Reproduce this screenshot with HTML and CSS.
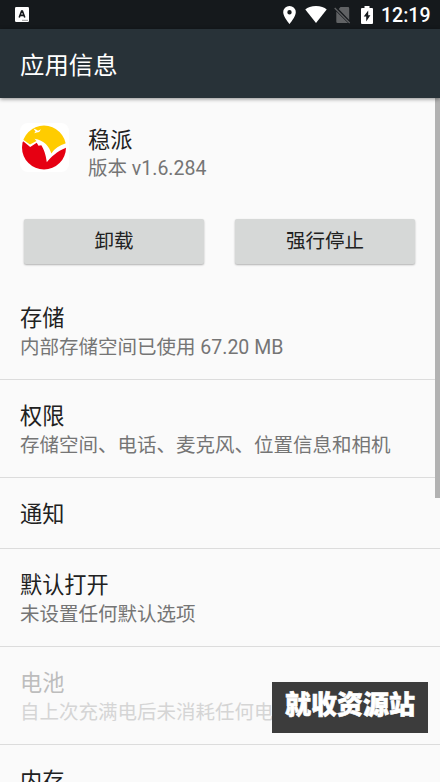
FILE: index.html
```html
<!DOCTYPE html>
<html lang="zh-CN">
<head>
<meta charset="utf-8">
<title>应用信息</title>
<link rel="stylesheet" href="styles.css">
</head>
<body>
<div class="screen">
  <div class="status">
    <svg class="notice" width="14" height="15" viewBox="0 0 14 15"><rect width="14" height="15" rx="1.2" fill="#fff"/><path d="M4.200 10.500 6.600 4h.8l2.400 6.500M5.200 8.400h3.600" fill="none" stroke="#15191c" stroke-width="1.600"/><path d="M7 13.300h6" stroke="#999" stroke-width="1"/></svg>
    <svg class="pin" width="13" height="18" viewBox="0 0 13 18"><path fill="#fff" fill-rule="evenodd" d="M6.500 0A6.300 6.300 0 0 0 .2 6.300C.2 11 6.500 18 6.500 18s6.300-7 6.300-11.700A6.300 6.300 0 0 0 6.500 0Zm0 4.100a2.200 2.200 0 1 1 0 4.400 2.200 2.200 0 0 1 0-4.400Z"/></svg>
    <svg class="wifi" width="22" height="17" viewBox="0 0 22 17"><path fill="#fff" d="M11 17 .3 3.500C2.500 1.400 6.400 0 11 0s8.500 1.400 10.700 3.500Z"/></svg>
    <svg class="sim" width="17" height="18" viewBox="0 0 17 18"><path fill="#606264" d="M6.500 1H14q1.200 0 1.200 1.200V14L4.700 3ZM2.300 5.500 14 17H3.500q-1.200 0-1.200-1.200Z"/><path d="m.7 2 15 15" stroke="#606264" stroke-width="1.300"/></svg>
    <svg class="battery" width="12" height="18" viewBox="0 0 12 18"><path fill="#fff" d="M3.500 0h5v2H11q1 0 1 1v14q0 1-1 1H1q-1 0-1-1V3q0-1 1-1h2.500Z"/><path fill="#15191c" d="M7.200 4.500 2.700 10.500h2.500v5l4.200-6.300H7.200Z"/></svg>
    <span class="clock">12:19</span>
  </div>
  <header class="appbar">应用信息</header>
  <main class="content">
    <section class="app">
      <svg class="logo" width="49" height="49" viewBox="0 0 49 49">
        <rect width="49" height="49" rx="8" fill="#fff"/>
        <clipPath id="disc"><circle cx="24" cy="24.500" r="22"/></clipPath>
        <g clip-path="url(#disc)">
          <path fill="#fc0" d="M0 0h49v19.500C41 21.500 35 25 31.300 30.500 29.500 23.500 24 17.500 14.500 15.800L16.500 18 10 21.500 3.500 17H0Z"/>
          <path fill="#e60012" d="M0 18.500h3.500l6.700 5.500 6.500-4.200 1.800 3 2.800-.5c2.500 4 4.500 9 5.500 17C31.500 33 38 27.500 49 23.500V49H0Z"/>
          <path fill="#fff" d="m13.500 5.500 3 1.300 1.500 1 3-1.600-1.800 2.800-2.400.6-2.600.6 1.300-1.600Z"/>
        </g>
      </svg>
      <div class="about">
        <div class="name">稳派</div>
        <div class="summary">版本 v1.6.284</div>
      </div>
    </section>
    <div class="actions">
      <button class="action">卸载</button>
      <button class="action">强行停止</button>
    </div>
    <section class="item"><div class="name">存储</div><div class="summary">内部存储空间已使用 67.20 MB</div></section>
    <section class="item"><div class="name">权限</div><div class="summary">存储空间、电话、麦克风、位置信息和相机</div></section>
    <section class="item single"><div class="name">通知</div></section>
    <section class="item"><div class="name">默认打开</div><div class="summary">未设置任何默认选项</div></section>
    <section class="item disabled"><div class="name">电池</div><div class="summary">自上次充满电后未消耗任何电量</div></section>
    <section class="item"><div class="name">内存</div></section>
  </main>
  <div class="scrollbar"></div>
  <div class="watermark">就收资源站</div>
</div>
</body>
</html>
```

FILE: styles.css
```css
* { box-sizing: border-box; }
body { margin: 0; background: #fafafa; }
.screen {
  position: relative;
  width: 440px;
  height: 782px;
  overflow: hidden;
  display: flex;
  flex-direction: column;
  font-family: Roboto, "Noto Sans CJK SC", sans-serif;
  color: #212121;
}
.status {
  flex: none;
  height: 29px;
  display: flex;
  align-items: center;
  padding: 0 9px 0 15px;
  background: #15191c;
}
.pin { margin-left: auto; margin-right: 9px; }
.wifi { margin-right: 7px; }
.sim { margin-right: 10px; }
.battery { margin-right: 8px; }
.clock {
  width: 50px;
  height: 29px;
  color: #fff;
  font-size: 19.5px;
  font-weight: 500;
  line-height: 31px;
  white-space: nowrap;
}
.appbar {
  flex: none;
  height: 69px;
  padding-left: 20px;
  background: #283238;
  color: #fff;
  font-size: 24.4px;
  line-height: 73px;
  box-shadow: 0 1px 4px rgba(0, 0, 0, .45);
  z-index: 1;
}
.content { flex: none; }
.app {
  display: flex;
  height: 121px;
  padding: 25px 20px 0;
  gap: 19px;
}
.about { padding-top: 2px; }
.name { height: 31px; font-size: 22.2px; line-height: 31px; white-space: nowrap; }
.about .name { height: 30px; }
.summary { height: 27px; font-size: 19.5px; line-height: 27px; color: #757575; white-space: nowrap; }
.actions {
  display: flex;
  height: 63px;
  padding: 0 25px 0 24px;
  gap: 31px;
}
.action {
  flex: 1;
  height: 45px;
  border: 0;
  padding: 0;
  border-radius: 2px;
  background: #d6d8d7;
  color: #212121;
  font: 19.5px/45px Roboto, "Noto Sans CJK SC", sans-serif;
  box-shadow: 0 1px 2px rgba(0, 0, 0, .3);
}
.item {
  height: 98px;
  padding: 21px 20px 0;
  border-bottom: 1px solid #dcdcdc;
}
.single { height: 71px; }
.disabled .name { color: #bdbdbd; }
.disabled .summary { color: #d5d5d5; }
.scrollbar {
  position: absolute;
  top: 97px;
  right: 0;
  width: 5px;
  height: 401px;
  background: #b2b2b2;
}
.watermark {
  position: absolute;
  left: 272px;
  top: 682px;
  width: 156px;
  height: 51px;
  background: #3c3c3c;
  color: #fff;
  text-align: center;
  font-family: "Noto Sans CJK SC", sans-serif;
  font-weight: 900;
  font-size: 26px;
  line-height: 41px;
  -webkit-text-stroke: .6px #fff;
}
```
